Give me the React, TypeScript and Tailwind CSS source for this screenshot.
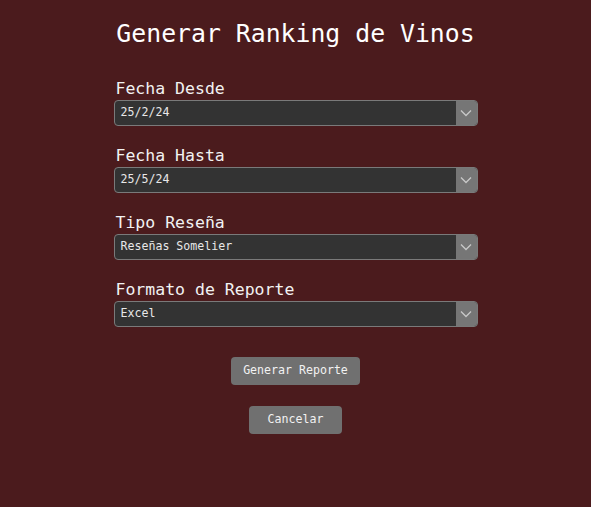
const fields = [
  { label: 'Fecha Desde', value: '25/2/24' },
  { label: 'Fecha Hasta', value: '25/5/24' },
  { label: 'Tipo Reseña', value: 'Reseñas Somelier' },
  { label: 'Formato de Reporte', value: 'Excel' },
];

const Chevron = () => (
  <svg width="12" height="8" viewBox="0 0 12 8" fill="none">
    <path d="M1 1.5 6 6.5 11 1.5" stroke="#c8c8c8" strokeWidth="1.3" />
  </svg>
);

const Select = ({ value }: { value: string }) => (
  <div className="flex h-[26px] w-full rounded-[4px] border border-[#7a7a7a] bg-[#333333]">
    <div className="flex flex-1 items-center px-[6px] text-[11.6px] text-[#e8e8e8]">{value}</div>
    <div className="flex w-[21px] items-center justify-center rounded-r-[3px] bg-[#767676]">
      <Chevron />
    </div>
  </div>
);

const App = () => {
  return (
    <div
      className="min-h-[507px] w-full bg-[#4b1b1d] text-white"
      style={{ fontFamily: '"DejaVu Sans Mono", "Liberation Mono", monospace' }}
    >
      <div className="mx-auto flex w-[364px] flex-col pt-[17px]">
        <h1 className="whitespace-nowrap text-center text-[24.8px] leading-[34px]">Generar Ranking de Vinos</h1>
        <div className="mt-[27px] flex flex-col gap-[19px]">
          {fields.map((f) => (
            <div key={f.label} className="flex flex-col">
              <label className="pl-[2px] text-[16.5px] leading-[22px] text-[#f2f2f2]">{f.label}</label>
              <Select value={f.value} />
            </div>
          ))}
        </div>
        <div className="mt-[30px] flex flex-col items-center gap-[21px]">
          <button className="h-[28px] rounded-[4px] bg-[#707070] px-[12px] text-[11.6px] text-[#f2f2f2]">
            Generar Reporte
          </button>
          <button className="h-[28px] rounded-[4px] bg-[#707070] px-[19px] text-[11.6px] text-[#f2f2f2]">
            Cancelar
          </button>
        </div>
      </div>
    </div>
  );
};

export default App;
